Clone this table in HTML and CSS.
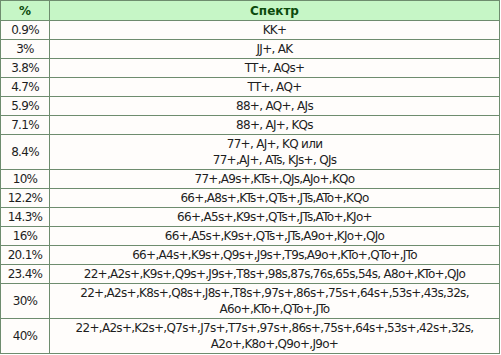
FILE: index.html
```html
<!DOCTYPE html>
<html lang="ru">
<head>
  <meta charset="UTF-8" />
  <title>Спектр</title>
  <link rel="stylesheet" href="styles.css">
</head>
<body>
  <table class="range-table">
    <tr>
      <th class="pct">%</th>
      <th>Спектр</th>
    </tr>
    <tr><td class="pct">0.9%</td><td>KK+</td></tr>
    <tr><td class="pct">3%</td><td>JJ+, AK</td></tr>
    <tr><td class="pct">3.8%</td><td>TT+, AQs+</td></tr>
    <tr><td class="pct">4.7%</td><td>TT+, AQ+</td></tr>
    <tr><td class="pct">5.9%</td><td>88+, AQ+, AJs</td></tr>
    <tr><td class="pct">7.1%</td><td>88+, AJ+, KQs</td></tr>
    <tr><td class="pct">8.4%</td><td>77+, AJ+, KQ или<br>77+,AJ+, ATs, KJs+, QJs</td></tr>
    <tr><td class="pct">10%</td><td>77+,A9s+,KTs+,QJs,AJo+,KQo</td></tr>
    <tr><td class="pct">12.2%</td><td>66+,A8s+,KTs+,QTs+,JTs,ATo+,KQo</td></tr>
    <tr><td class="pct">14.3%</td><td>66+,A5s+,K9s+,QTs+,JTs,ATo+,KJo+</td></tr>
    <tr><td class="pct">16%</td><td>66+,A5s+,K9s+,QTs+,JTs,A9o+,KJo+,QJo</td></tr>
    <tr><td class="pct">20.1%</td><td>66+,A4s+,K9s+,Q9s+,J9s+,T9s,A9o+,KTo+,QTo+,JTo</td></tr>
    <tr><td class="pct">23.4%</td><td>22+,A2s+,K9s+,Q9s+,J9s+,T8s+,98s,87s,76s,65s,54s, A8o+,KTo+,QJo</td></tr>
    <tr><td class="pct">30%</td><td>22+,A2s+,K8s+,Q8s+,J8s+,T8s+,97s+,86s+,75s+,64s+,53s+,43s,32s,<br>A6o+,KTo+,QTo+,JTo</td></tr>
    <tr><td class="pct">40%</td><td>22+,A2s+,K2s+,Q7s+,J7s+,T7s+,97s+,86s+,75s+,64s+,53s+,42s+,32s,<br>A2o+,K8o+,Q9o+,J9o+</td></tr>
  </table>
</body>
</html>
```

FILE: styles.css
```css
body {
  margin: 0;
  background-color: #fff;
  font-family: "DejaVu Sans", Verdana, sans-serif;
  font-size: 12px;
  letter-spacing: -0.7px;
  color: #1e1e1e;
}
.range-table {
  width: 500px;
  border-collapse: collapse;
  background-color: #fffdfb;
}
.range-table th,
.range-table td {
  border: 1px solid #6e8c6e;
  text-align: center;
  padding: 1px 2px;
  line-height: 16px;
  height: 16px;
}
.range-table th {
  background-color: #c6f6c6;
  color: #0c4a0c;
  font-weight: bold;
  letter-spacing: 0;
  height: 17px;
}
.pct {
  width: 44px;
}
```
